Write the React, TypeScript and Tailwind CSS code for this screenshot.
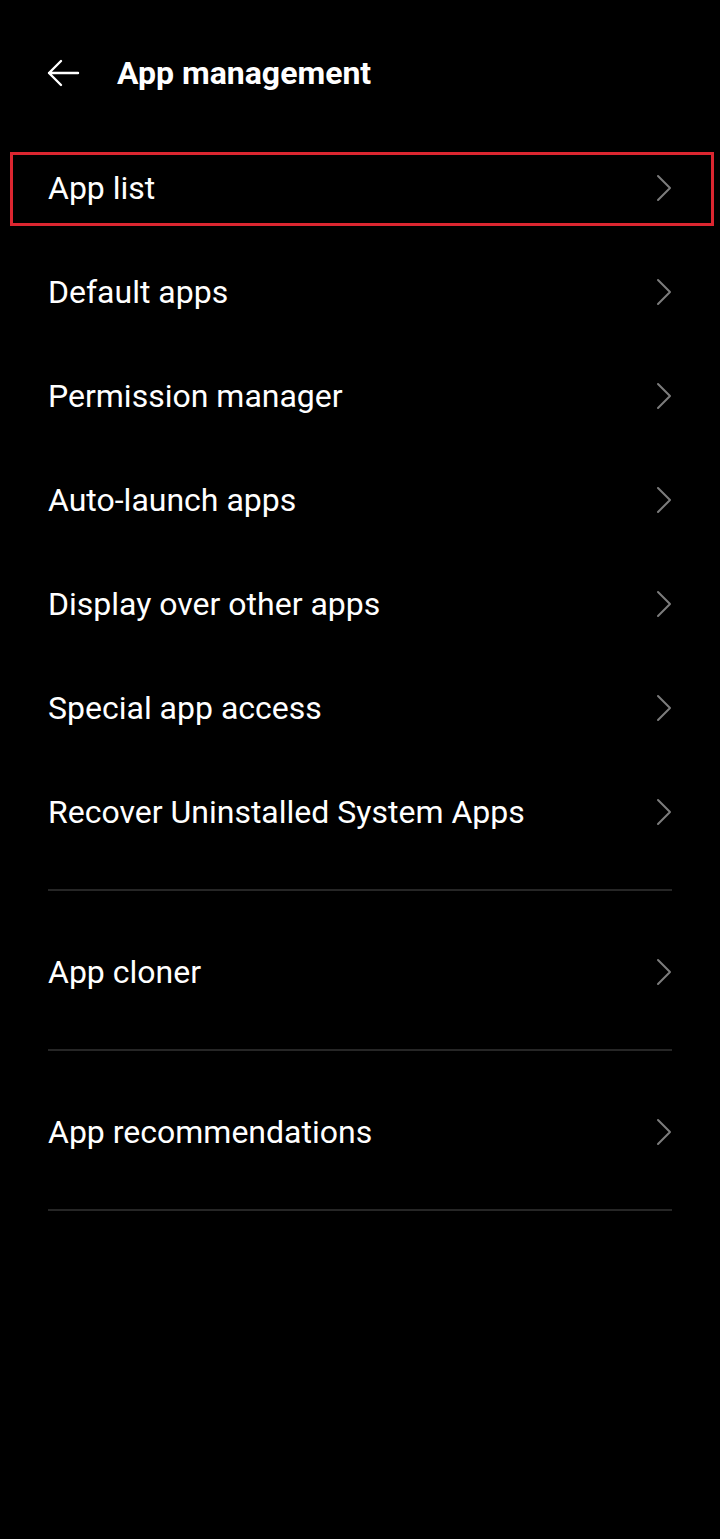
import React from 'react'

const GROUPS = [
  [
    'App list',
    'Default apps',
    'Permission manager',
    'Auto-launch apps',
    'Display over other apps',
    'Special app access',
    'Recover Uninstalled System Apps',
  ],
  ['App cloner'],
  ['App recommendations'],
]

function Chevron() {
  return (
    <svg width="16" height="28" viewBox="0 0 16 28" fill="none" className="shrink-0">
      <path d="M2 2 L14 14 L2 26" stroke="#7c7c7c" strokeWidth="2" strokeLinecap="round" strokeLinejoin="round" />
    </svg>
  )
}

function Row({ label, highlight }: { label: string; highlight?: boolean }) {
  return (
    <div className="relative flex h-[104px] items-center justify-between pl-[48px] pr-[48px]">
      {highlight && (
        <div className="pointer-events-none absolute left-[10px] right-[6px] top-[16px] bottom-[14px] border-[3px] border-[#dc2630]" />
      )}
      <span className="text-[32px] leading-none text-white">{label}</span>
      <Chevron />
    </div>
  )
}

export default function App() {
  return (
    <div
      className="min-h-[1539px] w-full bg-black text-white"
      style={{ fontFamily: 'Roboto, "Noto Sans", sans-serif' }}
    >
      {/* Header */}
      <header className="flex h-[136px] items-start pl-[46px] pt-[56px]">
        <svg width="34" height="30" viewBox="0 0 34 30" fill="none" className="mt-[2px]">
          <path d="M32 15 H3 M15 3 L3 15 L15 27" stroke="white" strokeWidth="2.4" strokeLinecap="round" strokeLinejoin="round" />
        </svg>
        <h1 className="ml-[37px] text-[32px] font-bold leading-[34px]">App management</h1>
      </header>

      {GROUPS.map((group, gi) => (
        <div key={gi}>
          {group.map((label, i) => (
            <Row key={label} label={label} highlight={gi === 0 && i === 0} />
          ))}
          <div className="mx-[48px] mt-[25px] mb-[29px] h-[2px] bg-[#262626]" />
        </div>
      ))}
    </div>
  )
}
